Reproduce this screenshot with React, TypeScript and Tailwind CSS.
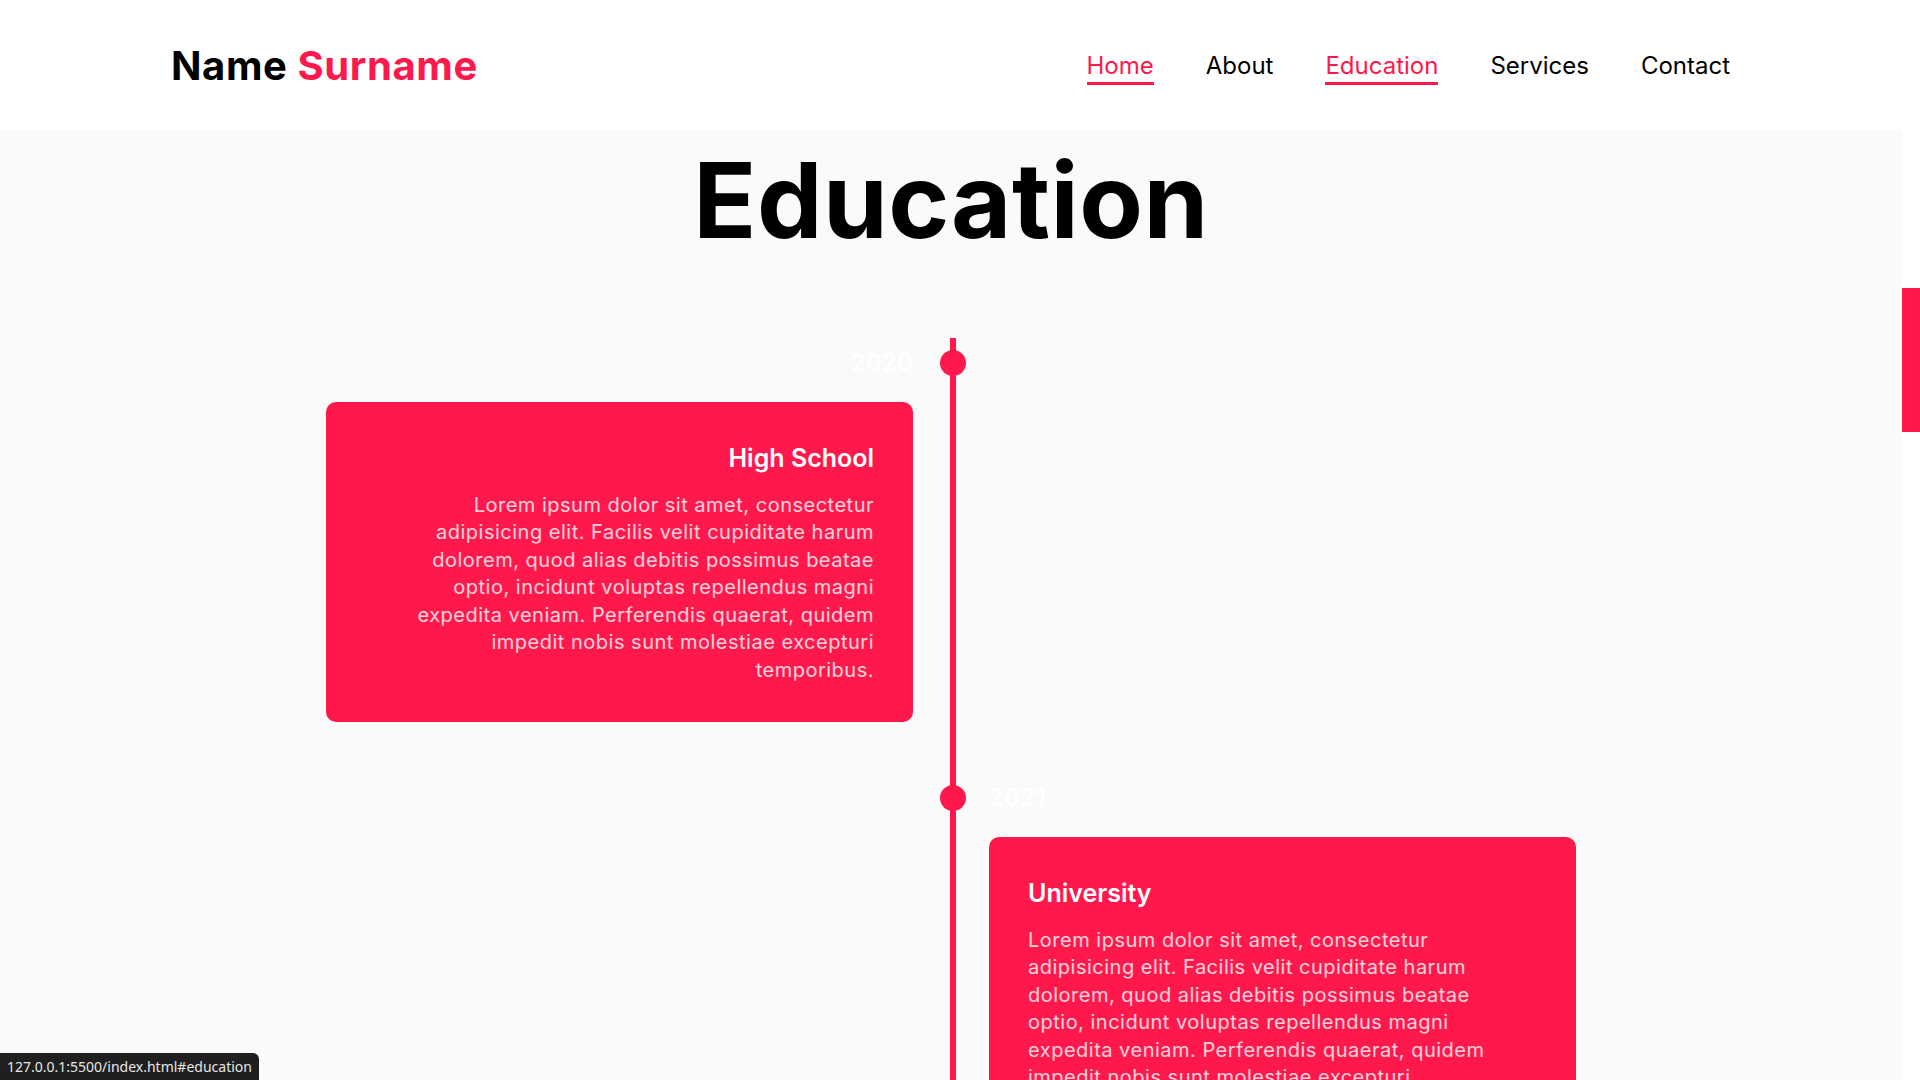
const navLinks = [
    { label: "Home", active: true },
    { label: "About", active: false },
    { label: "Education", active: true },
    { label: "Services", active: false },
    { label: "Contact", active: false },
]

const lorem = [
    "Lorem ipsum dolor sit amet, consectetur",
    "adipisicing elit. Facilis velit cupiditate harum",
    "dolorem, quod alias debitis possimus beatae",
    "optio, incidunt voluptas repellendus magni",
    "expedita veniam. Perferendis quaerat, quidem",
    "impedit nobis sunt molestiae excepturi",
    "temporibus.",
]

const education = [
    { year: "2020", title: "High School", side: "left" },
    { year: "2021", title: "University", side: "right" },
]

function Card({ title, align }: { title: string; align: "left" | "right" }) {
    return (
        <div className={`w-[587px] rounded-[10px] bg-[#ff184c] px-[39px] pt-[38px] pb-[38px] ${align === "left" ? "text-right" : "text-left"}`}>
            <h3 className="text-white text-[25px] font-semibold leading-[37.5px]">{title}</h3>
            <p className="mt-[14px] text-white/80 text-[20px] tracking-[0.5px] leading-[27.5px] whitespace-nowrap">
                {lorem.map((line, i) => (
                    <span key={i}>
                        {line}
                        {i < lorem.length - 1 && <br />}
                    </span>
                ))}
            </p>
        </div>
    )
}

function Entry({ year, title, side }: { year: string; title: string; side: string }) {
    const content = (align: "left" | "right") => (
        <div className={`flex flex-col pb-[51px] ${align === "left" ? "items-end" : "items-start"}`}>
            <span className="h-[49px] leading-[49px] text-white text-[24px] font-bold">{year}</span>
            <div className="mt-[15px]">
                <Card title={title} align={align} />
            </div>
        </div>
    )

    return (
        <div className="grid grid-cols-[587px_76px_587px] justify-center">
            <div>{side === "left" && content("left")}</div>
            <div className="relative flex">
                <div className="ml-[37px] w-[6px] bg-[#ff184c]" />
                <div className="absolute left-[27px] top-[12px] w-[26px] h-[26px] rounded-full bg-[#ff184c]" />
            </div>
            <div>{side === "right" && content("right")}</div>
        </div>
    )
}

export default function App() {
    return (
        <div className="h-[1080px] overflow-hidden flex font-['Inter',sans-serif] bg-white">
            <div className="flex-1 flex flex-col">
                <header className="h-[130px] shrink-0 bg-white flex items-center justify-between pl-[171px] pr-[172px] pt-[2px]">
                    <div className="text-[40px] font-bold leading-none tracking-[0.6px]">
                        <span className="text-black">Name </span>
                        <span className="text-[#ff184c]">Surname</span>
                    </div>
                    <nav className="flex gap-[52px]">
                        {navLinks.map((link) => (
                            <a key={link.label} href="#" className={`relative text-[24px] leading-[32px] ${link.active ? "text-[#ff184c]" : "text-black"}`}>
                                {link.label}
                                {link.active && <span className="absolute left-0 right-0 top-[32px] h-[3px] bg-[#ff184c]" />}
                            </a>
                        ))}
                    </nav>
                </header>

                <section className="flex-1 bg-[#fafafa] pt-[18px]">
                    <h1 className="text-center text-black text-[104px] font-bold leading-[104px] tracking-[0.5px]">Education</h1>
                    <div className="mt-[86px]">
                        {education.map((e) => (
                            <Entry key={e.year} year={e.year} title={e.title} side={e.side} />
                        ))}
                    </div>
                </section>
            </div>

            <aside className="w-[18px] shrink-0 bg-white">
                <div className="mt-[288px] h-[144px] bg-[#ff184c]" />
            </aside>

            <div className="fixed bottom-0 left-0 h-[27px] px-[7px] flex items-center bg-[#1f1f1f] rounded-tr-[6px] text-[#e6e6e6] text-[14px] font-['Noto_Sans',sans-serif]">
                127.0.0.1:5500/index.html#education
            </div>
        </div>
    )
}
